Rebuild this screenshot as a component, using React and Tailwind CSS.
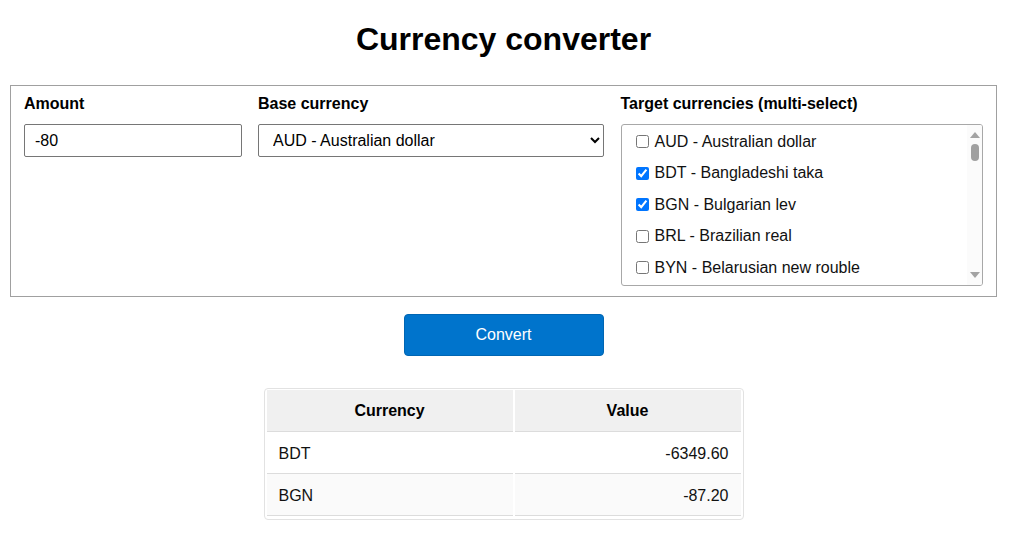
import { useState } from 'react'

const currencies = [
  ['AUD', 'Australian dollar'],
  ['BDT', 'Bangladeshi taka'],
  ['BGN', 'Bulgarian lev'],
  ['BRL', 'Brazilian real'],
  ['BYN', 'Belarusian new rouble'],
]

const results = [
  ['BDT', '-6349.60'],
  ['BGN', '-87.20'],
]

function Scrollbar() {
  return (
    <div className="w-[15px] flex flex-col items-center bg-[#fbfbfb]">
      <svg width="10" height="6" viewBox="0 0 10 6" className="mt-[7px]">
        <path d="M5 0 L10 6 L0 6 Z" fill="#a3a3a3" />
      </svg>
      <div className="mt-[6px] w-[8px] h-[17px] rounded-full bg-[#a0a0a0]" />
      <div className="flex-1" />
      <svg width="10" height="6" viewBox="0 0 10 6" className="mb-[7px]">
        <path d="M0 0 L10 0 L5 6 Z" fill="#a3a3a3" />
      </svg>
    </div>
  )
}

export default function App() {
  const [amount, setAmount] = useState('-80')
  const [base, setBase] = useState('AUD')
  const [targets, setTargets] = useState(['BDT', 'BGN'])

  const toggle = (code) =>
    setTargets((t) => (t.includes(code) ? t.filter((c) => c !== code) : [...t, code]))

  return (
    <div className="w-[1032px] h-[552px] bg-white text-black font-['Liberation_Sans',Arial,sans-serif]">
      <div className="ml-[10px] w-[987px] pt-[21px]">
        <h1 className="text-[32px] font-bold leading-[37px] text-center">Currency converter</h1>

        <div className="mt-[27px] border border-[#a0a0a0] pt-[9px] pb-[10px] px-[13px] flex gap-[16px]">
          <div className="w-[218px] flex flex-col">
            <label className="text-[16px] font-bold leading-[18px] mb-[11px]">Amount</label>
            <input
              type="text"
              value={amount}
              onChange={(e) => setAmount(e.target.value)}
              className="h-[33px] border border-[#767676] rounded-[2px] px-[10px] text-[16px] outline-none"
            />
          </div>

          <div className="w-[346px] flex flex-col">
            <label className="text-[16px] font-bold leading-[18px] mb-[11px]">Base currency</label>
            <select
              value={base}
              onChange={(e) => setBase(e.target.value)}
              className="h-[33px] border border-[#767676] rounded-[2px] pl-[10px] pr-[6px] text-[16px] bg-white appearance-auto"
            >
              <option value="AUD">AUD - Australian dollar</option>
            </select>
          </div>

          <div className="ml-[1px] w-[363px] flex flex-col">
            <label className="text-[16px] font-bold leading-[18px] mb-[11px]">
              Target currencies (multi-select)
            </label>
            <div className="h-[162px] border border-[#a8a8a8] rounded-[3px] flex overflow-hidden">
              <div className="flex-1 pt-[1px]">
                {currencies.map(([code, name]) => (
                  <label
                    key={code}
                    className="flex items-center h-[31.5px] pl-[14px] text-[16px] leading-[18px] text-[#111]"
                  >
                    <input
                      type="checkbox"
                      checked={targets.includes(code)}
                      onChange={() => toggle(code)}
                      className="w-[13px] h-[13px] m-0 mr-[6px]"
                    />
                    {code} - {name}
                  </label>
                ))}
              </div>
              <Scrollbar />
            </div>
          </div>
        </div>

        <div className="flex justify-center mt-[17px]">
          <button className="w-[200px] h-[42px] bg-[#0074cc] border border-[#0066b3] rounded-[4px] text-white text-[16px]">
            Convert
          </button>
        </div>

        <div className="flex justify-center mt-[32px]">
          <div className="w-[480px] border border-[#e2e2e2] rounded-[4px] pt-[1px] pb-[3px]">
            <table className="w-full border-separate [border-spacing:2px_0] text-[16px]">
              <thead>
                <tr>
                  <th className="w-[246px] h-[42px] bg-[#f0f0f0] border-b border-[#dcdcdc] font-bold text-center">
                    Currency
                  </th>
                  <th className="h-[42px] bg-[#f0f0f0] border-b border-[#dcdcdc] font-bold text-center">
                    Value
                  </th>
                </tr>
              </thead>
              <tbody>
                {results.map(([code, value], i) => (
                  <tr key={code} className={i % 2 === 1 ? 'bg-[#fafafa]' : 'bg-white'}>
                    <td className="h-[42px] px-[12px] pt-[3px] border-b border-[#dcdcdc] text-left text-[#111]">
                      {code}
                    </td>
                    <td className="h-[42px] px-[12px] pt-[3px] border-b border-[#dcdcdc] text-right text-[#111]">
                      {value}
                    </td>
                  </tr>
                ))}
              </tbody>
            </table>
          </div>
        </div>
      </div>
    </div>
  )
}
